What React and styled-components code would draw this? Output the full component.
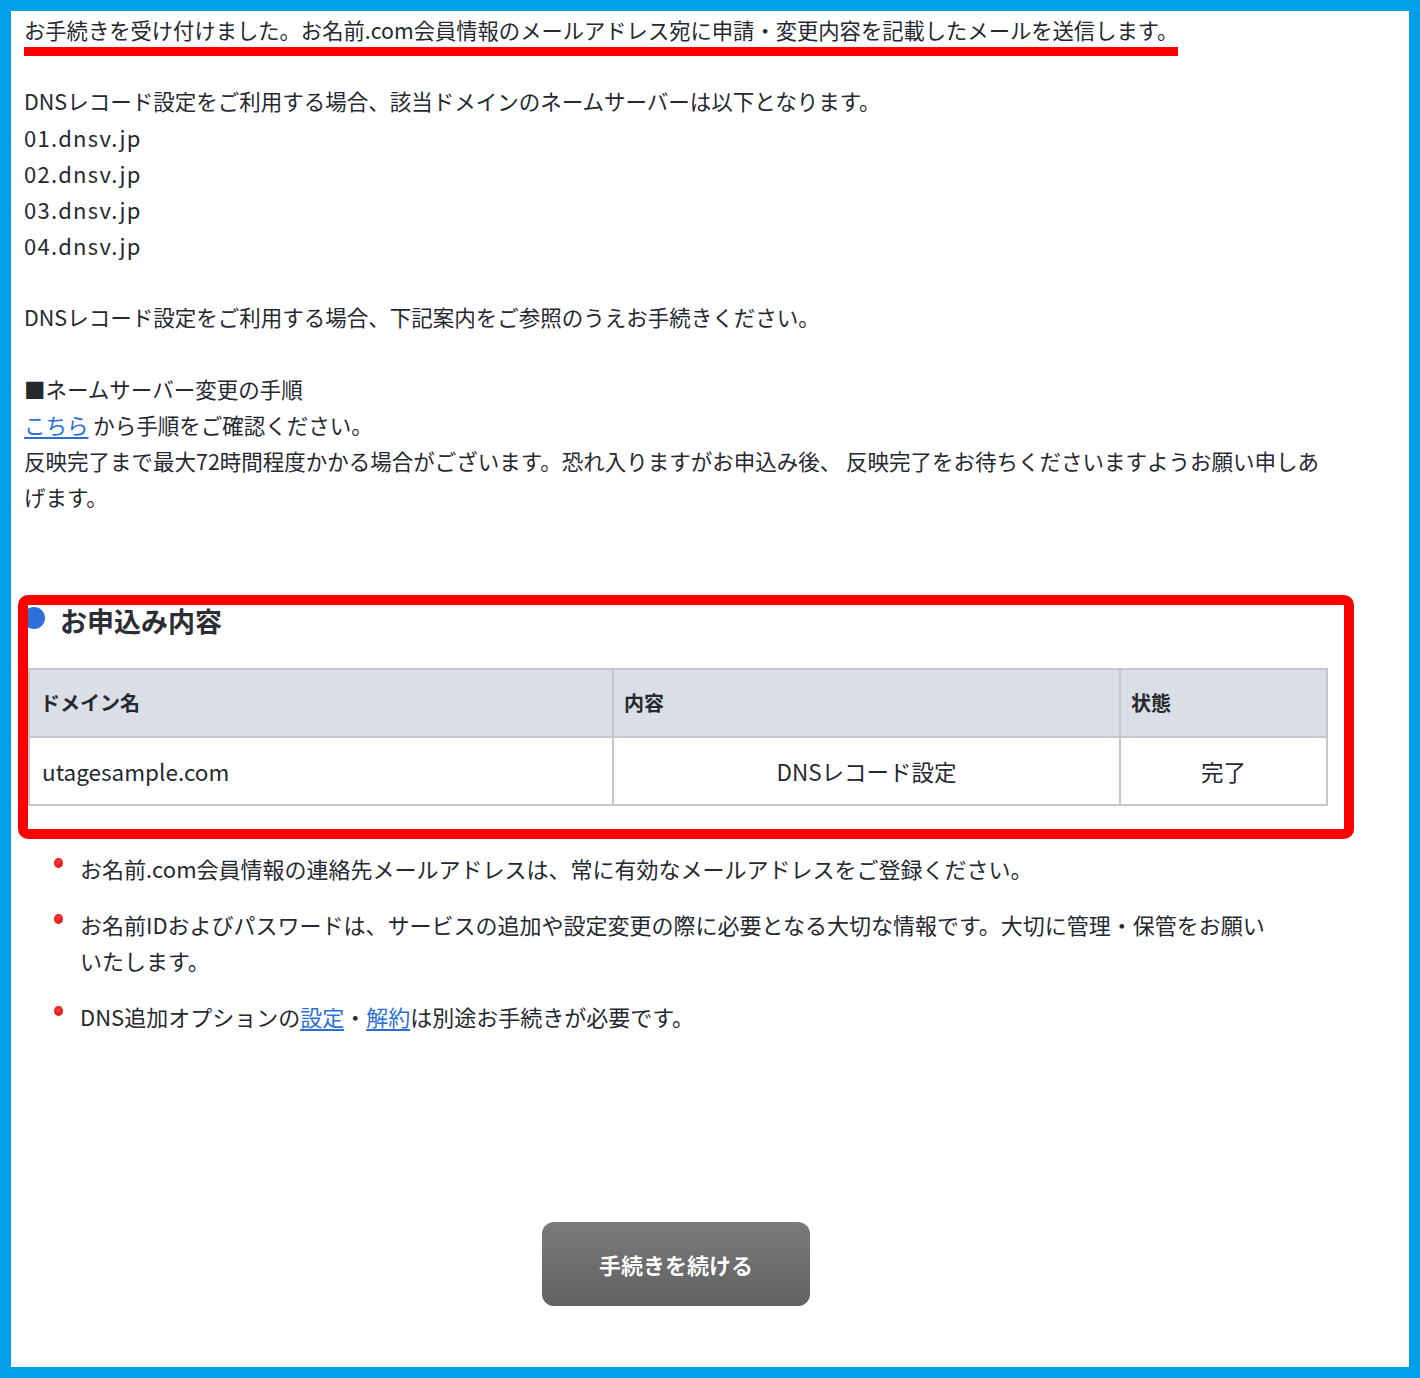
import React from 'react'
import styled, { createGlobalStyle } from 'styled-components'

const GlobalStyle = createGlobalStyle`
  html, body {
    margin: 0;
    padding: 0;
    background: #fff;
  }
  body {
    font-family: "Noto Sans CJK JP", "Noto Sans", sans-serif;
    color: #25292f;
  }
`

const Frame = styled.div`
  box-sizing: border-box;
  width: 1420px;
  min-height: 1378px;
  border: 11px solid #009fe8;
  background: #fff;
  padding: 1px 0 0 13px;
`

const Content = styled.div`
  width: 1304px;
  font-size: 22px;
  line-height: 36px;
`

const Lead = styled.div`
  width: fit-content;
  padding-right: 18px;
  font-size: 21.3px;
`

const Marker = styled.div`
  height: 9px;
  background: #ff0000;
  margin-top: -1px;
`

const Block = styled.div`
  margin-top: ${({ $top }) => $top || 0}px;
  font-size: 21.5px;
`

const Line = styled.div`
  min-height: 36px;
`

const Server = styled(Line)`
  font-size: 22px;
  letter-spacing: 1.3px;
`

const Link = styled.a`
  color: #2a6fd6;
  text-decoration: underline;
  text-underline-offset: 3px;
  cursor: pointer;
`

const Section = styled.section`
  position: relative;
  margin: 80px 0 0 4px;
  padding: 10px 0 33px;

  &:after {
    content: '';
    position: absolute;
    top: 0;
    bottom: 0;
    left: -10px;
    right: -26px;
    border: 10px solid #ff0000;
    border-radius: 10px;
    pointer-events: none;
  }
`

const Heading = styled.h2`
  display: flex;
  align-items: center;
  gap: 15px;
  margin: 0;
  font-size: 27px;
  line-height: 32px;
  font-weight: 700;
  color: #2b2e33;
`

const Dot = styled.span`
  width: 22px;
  height: 22px;
  margin-left: -5px;
  border-radius: 50%;
  background: #2f6fda;
  flex: none;
  position: relative;
  top: -3px;
`

const Table = styled.table`
  width: 1300px;
  margin-top: 31px;
  border-collapse: collapse;
  table-layout: fixed;
  font-size: 22.5px;

  th, td {
    border: 2px solid #c4c7cb;
    height: 66px;
    padding: 0 12px;
  }

  th {
    background: #dadfe6;
    text-align: left;
    font-size: 20px;
    font-weight: 700;
    padding: 0 10px;
  }
`

const HeadCell = styled.th`
  width: ${({ $w }) => ($w ? `${$w}px` : 'auto')};
`

const Cell = styled.td`
  text-align: ${({ $align }) => $align || 'left'};
`

const Notes = styled.ul`
  list-style: none;
  margin: 11px 0 0;
  padding: 0 44px 0 56px;
  font-size: 22px;
  line-height: 36px;

  li {
    position: relative;
  }

  li + li {
    margin-top: 20px;
  }

  li:before {
    content: '';
    position: absolute;
    left: -26px;
    top: 8px;
    width: 9px;
    height: 10px;
    border-radius: 50%;
    background: radial-gradient(circle at 45% 40%, #ff3b3b, #d40000);
  }
`

const ButtonRow = styled.div`
  display: flex;
  justify-content: center;
  margin-top: 188px;
  padding-bottom: 50px;
`

const Button = styled.button`
  width: 268px;
  height: 84px;
  border: none;
  border-radius: 12px;
  background: linear-gradient(#7b7b7b, #616161);
  color: #fff;
  font-family: "Noto Sans CJK JP", sans-serif;
  font-size: 22px;
  font-weight: 700;
  text-shadow: 0 0 1px rgba(0, 0, 0, 0.4);
  cursor: pointer;
`

export default function App() {
  return (
    <>
      <GlobalStyle />
      <Frame>
        <Content>
          <Lead>
            お手続きを受け付けました。お名前.com会員情報のメールアドレス宛に申請・変更内容を記載したメールを送信します。
            <Marker />
          </Lead>

          <Block $top={27}>
            <Line>DNSレコード設定をご利用する場合、該当ドメインのネームサーバーは以下となります。</Line>
            <Server>01.dnsv.jp</Server>
            <Server>02.dnsv.jp</Server>
            <Server>03.dnsv.jp</Server>
            <Server>04.dnsv.jp</Server>
            <Line />
            <Line>DNSレコード設定をご利用する場合、下記案内をご参照のうえお手続きください。</Line>
            <Line />
            <Line>■ネームサーバー変更の手順</Line>
            <Line>
              <Link>こちら</Link> から手順をご確認ください。
            </Line>
            <Line>
              反映完了まで最大72時間程度かかる場合がございます。恐れ入りますがお申込み後、 反映完了をお待ちくださいますようお願い申しあげます。
            </Line>
          </Block>

          <Section>
            <Heading>
              <Dot />
              お申込み内容
            </Heading>
            <Table>
              <thead>
                <tr>
                  <HeadCell $w={562}>ドメイン名</HeadCell>
                  <HeadCell $w={485}>内容</HeadCell>
                  <HeadCell>状態</HeadCell>
                </tr>
              </thead>
              <tbody>
                <tr>
                  <Cell>utagesample.com</Cell>
                  <Cell $align="center">DNSレコード設定</Cell>
                  <Cell $align="center">完了</Cell>
                </tr>
              </tbody>
            </Table>
          </Section>

          <Notes>
            <li>お名前.com会員情報の連絡先メールアドレスは、常に有効なメールアドレスをご登録ください。</li>
            <li>お名前IDおよびパスワードは、サービスの追加や設定変更の際に必要となる大切な情報です。大切に管理・保管をお願いいたします。</li>
            <li>
              DNS追加オプションの<Link>設定</Link>・<Link>解約</Link>は別途お手続きが必要です。
            </li>
          </Notes>

          <ButtonRow>
            <Button>手続きを続ける</Button>
          </ButtonRow>
        </Content>
      </Frame>
    </>
  )
}
